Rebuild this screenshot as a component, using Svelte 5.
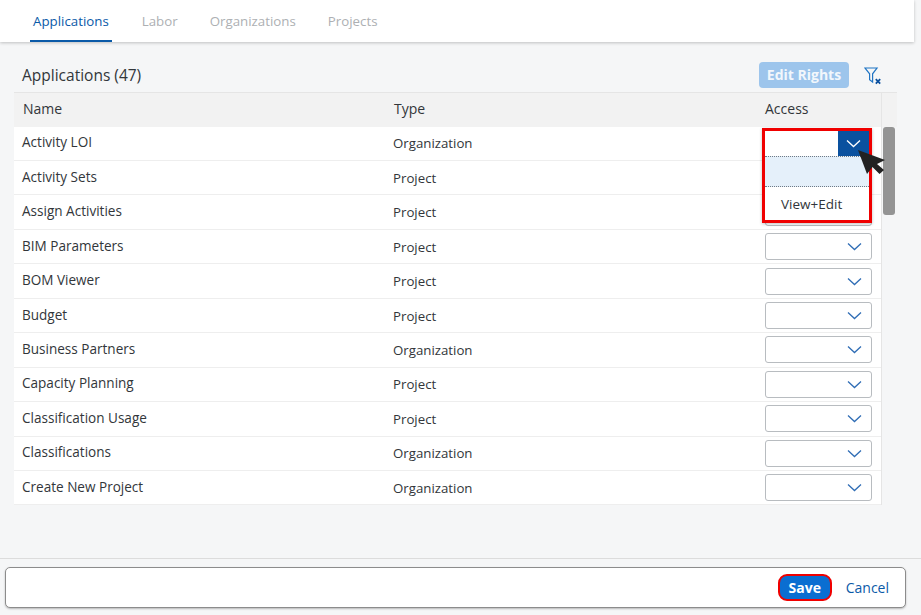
<script>
	const tabs = ["Applications", "Labor", "Organizations", "Projects"];
	const rows = [
		["Activity LOI", "Organization"],
		["Activity Sets", "Project"],
		["Assign Activities", "Project"],
		["BIM Parameters", "Project"],
		["BOM Viewer", "Project"],
		["Budget", "Project"],
		["Business Partners", "Organization"],
		["Capacity Planning", "Project"],
		["Classification Usage", "Project"],
		["Classifications", "Organization"],
		["Create New Project", "Organization"],
	];
</script>

{#snippet chevron()}
	<svg class="chev" width="15" height="9" viewBox="0 0 15 9"><path d="M1 1.5 7.5 7.5 14 1.5" fill="none" stroke="currentColor" stroke-width="1.3" /></svg>
{/snippet}

<div class="page">
	<nav class="tabs">
		{#each tabs as tab, i}
			<div class="tab" class:active={i === 0}>{tab}</div>
		{/each}
	</nav>

	<main class="content">
		<div class="titlebar">
			<h2>Applications (47)</h2>
			<div class="actions">
				<button class="edit">Edit Rights</button>
				<svg class="filter" width="18" height="18" viewBox="0 0 18 18">
					<path d="M1 1H13L8.6 6.8V15L5.6 12.6V6.8Z" fill="none" stroke="#1f74c4" stroke-width="1.2" />
					<path d="M11.8 12.2 16.2 16.6M16.2 12.2 11.8 16.6" stroke="#0a4f9e" stroke-width="1.8" />
				</svg>
			</div>
		</div>

		<div class="table">
			<div class="head">
				<div class="c1">Name</div>
				<div class="c2">Type</div>
				<div class="c3">Access</div>
				<div class="c4"></div>
			</div>
			<div class="body">
				<div class="rows">
					{#each rows as row}
						<div class="row">
							<div class="c1 name">{row[0]}</div>
							<div class="c2 type">{row[1]}</div>
							<div class="c3">
								<div class="select">{@render chevron()}</div>
							</div>
						</div>
					{/each}
				</div>
				<div class="scroll"><div class="thumb"></div></div>
			</div>

			<div class="popover">
				<div class="field"><span class="arrow">{@render chevron()}</span></div>
				<div class="option selected"></div>
				<div class="option">View+Edit</div>
			</div>
			<svg class="cursor" width="32" height="30" viewBox="0 0 32 30">
				<path d="M3 3 30 13 22 17 29 23 24.5 27 17.5 20 12 27Z" fill="#222" />
			</svg>
		</div>
	</main>

	<footer>
		<div class="bar">
			<button class="save">Save</button>
			<button class="cancel">Cancel</button>
		</div>
	</footer>
</div>

<style>
	:global(body) {
		margin: 0;
		background: #f5f6f7;
	}

	.page {
		width: 921px;
		height: 615px;
		display: flex;
		flex-direction: column;
		font-family: "Open Sans", "Liberation Sans", sans-serif;
		font-size: 14px;
		color: #32363a;
		background: #f5f6f7;
		overflow: hidden;
	}

	.tabs {
		height: 42px;
		width: 914px;
		flex: none;
		box-sizing: border-box;
		padding: 0 0 0 30px;
		display: flex;
		gap: 26px;
		background: #fff;
		box-shadow: 0 1px 3px rgba(0, 0, 0, 0.22);
	}

	.tab {
		box-sizing: border-box;
		height: 42px;
		padding: 13px 3px 0;
		line-height: 17px;
		font-size: 13.3px;
		color: #adb0b3;
	}

	.tab.active {
		color: #0a5aa8;
		border-bottom: 2px solid #0a5aa8;
		margin-right: 1px;
	}

	.content {
		flex: 1;
		padding: 0 0 0 14px;
		min-height: 0;
	}

	.titlebar {
		height: 50px;
		width: 868px;
		box-sizing: border-box;
		padding: 15px 0 0 8px;
		display: flex;
		justify-content: space-between;
		align-items: center;
	}

	h2 {
		margin: 0;
		font-size: 15.5px;
		font-weight: 400;
	}

	.actions {
		display: flex;
		align-items: center;
		gap: 15px;
	}

	button {
		font-family: inherit;
		border: none;
	}

	.edit {
		width: 90px;
		height: 26px;
		padding: 0;
		border-radius: 4px;
		background: #9dc5ec;
		color: #f2f7fc;
		font-size: 14px;
		font-weight: 700;
	}

	.filter {
		margin-top: 2px;
	}

	.table {
		position: relative;
		width: 883px;
	}

	.head {
		display: flex;
		height: 34.6px;
		align-items: center;
		width: 883px;
		background: #f2f2f2;
		border-top: 1px solid #e5e5e5;
		box-sizing: border-box;
	}

	.head > div {
		padding-bottom: 3px;
	}

	.head .c1 {
		padding-left: 9px;
	}

	.head .c2 {
		padding-left: 1px;
	}

	.head .c4 {
		flex: 1;
		height: 100%;
		padding: 0;
		border-left: 1px solid #e5e5e5;
	}

	.c1 {
		width: 379px;
		padding-left: 8px;
		box-sizing: border-box;
		flex: none;
	}

	.c2 {
		width: 371px;
		flex: none;
		box-sizing: border-box;
	}

	.c3 {
		width: 117px;
		flex: none;
		box-sizing: border-box;
		padding-left: 1px;
	}

	.body {
		display: flex;
	}

	.rows {
		width: 867px;
		background: #fff;
	}

	.row {
		height: 34.45px;
		box-sizing: border-box;
		display: flex;
		align-items: center;
		border-bottom: 1px solid #eeeeee;
	}

	.name {
		padding-bottom: 2px;
		font-size: 13.55px;
	}

	.type {
		font-size: 13.25px;
	}

	.select {
		box-sizing: border-box;
		width: 107px;
		height: 27px;
		background: #fff;
		border: 1px solid #b8bcc0;
		border-radius: 3px;
		display: flex;
		align-items: center;
		justify-content: flex-end;
		padding-right: 9px;
		color: #2f6db5;
	}

	.scroll {
		width: 16px;
		box-sizing: border-box;
		border-left: 1px solid #e5e5e5;
		padding: 0 1px;
	}

	.thumb {
		width: 12px;
		height: 88px;
		border-radius: 3px;
		background: #949494;
	}

	.popover {
		position: absolute;
		left: 748px;
		top: 36px;
		width: 110px;
		height: 95px;
		box-sizing: border-box;
		background: #fff;
		border: 3px solid #f00000;
		box-shadow: 0 1px 3px rgba(0, 0, 0, 0.25);
	}

	.field {
		height: 25px;
		background: #fff;
		display: flex;
		justify-content: flex-end;
	}

	.arrow {
		width: 31px;
		height: 25px;
		background: #0a519f;
		color: #fff;
		display: flex;
		align-items: center;
		justify-content: center;
	}

	.option {
		height: 31px;
		line-height: 34px;
		padding-left: 16px;
		font-size: 13.5px;
	}

	.option.selected {
		background: #e5f0fa;
		border-top: 1px dotted #6f7a85;
		border-bottom: 1px dotted #6f7a85;
		box-sizing: border-box;
	}

	.cursor {
		position: absolute;
		left: 841px;
		top: 55px;
	}

	footer {
		height: 57px;
		flex: none;
		box-sizing: border-box;
		border-top: 1px solid #dcdcdc;
		padding: 8px 0 0 5px;
	}

	.bar {
		width: 901px;
		height: 41px;
		box-sizing: border-box;
		background: #fff;
		border: 1px solid #8c8c8c;
		border-radius: 5px;
		box-shadow: 0 1px 2px rgba(0, 0, 0, 0.25);
		display: flex;
		align-items: center;
		justify-content: flex-end;
		gap: 14px;
		padding-right: 16px;
	}

	.save {
		width: 54px;
		height: 27px;
		padding: 0;
		box-sizing: border-box;
		background: #0a6ed1;
		color: #fff;
		font-size: 14px;
		font-weight: 700;
		border: 2px solid #f00000;
		border-radius: 9px;
	}

	.cancel {
		background: none;
		padding: 0;
		color: #0a5aa8;
		font-size: 14px;
	}
</style>
